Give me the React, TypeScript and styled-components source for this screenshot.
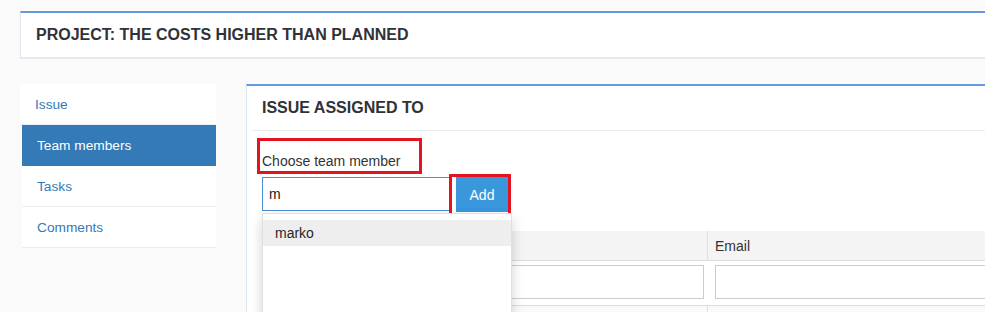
import * as React from 'react';
import styled, { createGlobalStyle } from 'styled-components';

const GlobalStyle = createGlobalStyle`
    html, body {
        margin: 0;
        padding: 0;
        background: #fafafa;
        overflow: hidden;
    }
    body {
        font-family: 'Liberation Sans', Arial, sans-serif;
        color: #333;
    }
`;

const $blue = '#629bdd';
const $link = '#337ab7';
const $annotation = '#e3141f';

const menu = [
    { label: 'Team members', active: true },
    { label: 'Tasks', active: false },
    { label: 'Comments', active: false },
];

export default function App() {
    return (
        <>
            <GlobalStyle />
            <Page>
                <TitlePanel>
                    <h1>PROJECT: THE COSTS HIGHER THAN PLANNED</h1>
                </TitlePanel>
                <Row>
                    <Sidebar>
                        <MenuItem>Issue</MenuItem>
                        <SubMenu>
                            {menu.map((m) => (
                                <MenuItem key={m.label} $active={m.active}>
                                    {m.label}
                                </MenuItem>
                            ))}
                        </SubMenu>
                    </Sidebar>
                    <MainPanel>
                        <PanelHeader>
                            <h2>ISSUE ASSIGNED TO</h2>
                        </PanelHeader>
                        <PanelBody>
                            <Label>Choose team member</Label>
                            <InputGroup>
                                <SearchInput defaultValue="m" />
                                <Highlight>
                                    <AddButton>Add</AddButton>
                                </Highlight>
                                <Dropdown>
                                    <DropdownItem $hover>marko</DropdownItem>
                                </Dropdown>
                            </InputGroup>
                            <Grid>
                                <HeadCell />
                                <HeadCell $divider>Email</HeadCell>
                                <BodyCell $first>
                                    <CellInput />
                                </BodyCell>
                                <BodyCell>
                                    <CellInput />
                                </BodyCell>
                                <BodyCell $first $muted />
                                <BodyCell $muted $divider />
                            </Grid>
                        </PanelBody>
                    </MainPanel>
                </Row>
            </Page>
        </>
    );
}

const Page = styled.div`
    width: 1100px;
    padding: 11px 0 0 20px;
`;

const TitlePanel = styled.div`
    display: flex;
    align-items: center;
    height: 44px;
    padding-left: 15px;
    background: #fff;
    border-top: 2px solid ${$blue};
    border-left: 1px solid #dfe6ef;
    border-bottom: 2px solid #e6eaef;

    h1 {
        margin: 0;
        font-size: 16px;
        font-weight: bold;
        color: #2f3237;
    }
`;

const Row = styled.div`
    display: flex;
    align-items: flex-start;
    gap: 30px;
    margin-top: 25px;
`;

const Sidebar = styled.nav`
    width: 196px;
    display: flex;
    flex-direction: column;
`;

const SubMenu = styled.div`
    display: flex;
    flex-direction: column;
    margin-left: 2px;
`;

const MenuItem = styled.a<{ $active?: boolean }>`
    display: flex;
    align-items: center;
    height: 40px;
    padding-left: 15px;
    font-size: 13.7px;
    color: ${(p) => (p.$active ? '#fff' : $link)};
    background: ${(p) => (p.$active ? $link : '#fff')};
    border-bottom: 1px solid ${(p) => (p.$active ? $link : '#e8ecf0')};
    cursor: pointer;
`;

const MainPanel = styled.section`
    flex: 1;
    min-height: 300px;
    background: #fff;
    border-top: 2px solid ${$blue};
    border-left: 1px solid #dce6f3;
`;

const PanelHeader = styled.div`
    display: flex;
    align-items: center;
    height: 44px;
    margin: 0 5px;
    padding-left: 10px;
    border-bottom: 1px solid #e8ecf1;

    h2 {
        margin: 0;
        font-size: 16px;
        font-weight: bold;
        color: #2f3237;
    }
`;

const PanelBody = styled.div`
    padding: 7px 0 0 15px;
`;

const Label = styled.label`
    display: block;
    width: 165px;
    box-sizing: border-box;
    margin-left: -5px;
    padding: 10px 0 0 2px;
    line-height: 20px;
    font-size: 14px;
    color: #333;
    border: 3px solid ${$annotation};
`;

const InputGroup = styled.div`
    position: relative;
    display: flex;
    align-items: flex-start;
`;

const SearchInput = styled.input`
    box-sizing: border-box;
    width: 188px;
    height: 34px;
    margin-top: 3px;
    padding: 0 6px;
    font-family: inherit;
    font-size: 14px;
    color: #222;
    border: 1px solid #4a8fd6;
    outline: none;
    background: #fff;
`;

const Highlight = styled.div`
    margin-left: -1px;
    padding: 0 0 1px 4px;
    background: #fff;
    border: 3px solid ${$annotation};
`;

const AddButton = styled.button`
    display: block;
    width: 52px;
    height: 35px;
    padding: 0;
    font-family: inherit;
    font-size: 14px;
    color: #fff;
    background: #3a97dc;
    border: none;
    cursor: pointer;
`;

const Dropdown = styled.div`
    position: absolute;
    top: 39px;
    left: 0;
    z-index: 10;
    width: 250px;
    height: 140px;
    box-sizing: border-box;
    padding: 6px 0;
    background: #fff;
    border: 1px solid rgba(0, 0, 0, 0.12);
    box-shadow: 0 6px 12px rgba(0, 0, 0, 0.175);
`;

const DropdownItem = styled.div<{ $hover?: boolean }>`
    height: 26px;
    line-height: 26px;
    padding-left: 12px;
    font-size: 14px;
    color: #262626;
    background: ${(p) => (p.$hover ? '#eeeeee' : 'transparent')};
`;

const Grid = styled.div`
    display: grid;
    grid-template-columns: 445px 1fr;
    margin-top: 15px;
`;

const HeadCell = styled.div<{ $divider?: boolean }>`
    height: 29px;
    display: flex;
    align-items: center;
    padding-left: 7px;
    font-size: 14px;
    color: #333;
    background: #f4f4f4;
    border-bottom: 1px solid #dcdcdc;
    border-left: ${(p) => (p.$divider ? '1px solid #e0e0e0' : 'none')};
`;

const BodyCell = styled.div<{ $first?: boolean; $muted?: boolean; $divider?: boolean }>`
    height: 45px;
    box-sizing: border-box;
    padding: 4px ${(p) => (p.$first ? '3px' : '0')} 7px 8px;
    background: ${(p) => (p.$muted ? '#f8fafc' : '#fff')};
    border-bottom: 1px solid #dcdcdc;
    border-left: ${(p) => (p.$divider ? '1px solid #e0e0e0' : 'none')};
`;

const CellInput = styled.input`
    box-sizing: border-box;
    width: 100%;
    height: 34px;
    border: 1px solid #cccccc;
    background: #fff;
    outline: none;
`;
